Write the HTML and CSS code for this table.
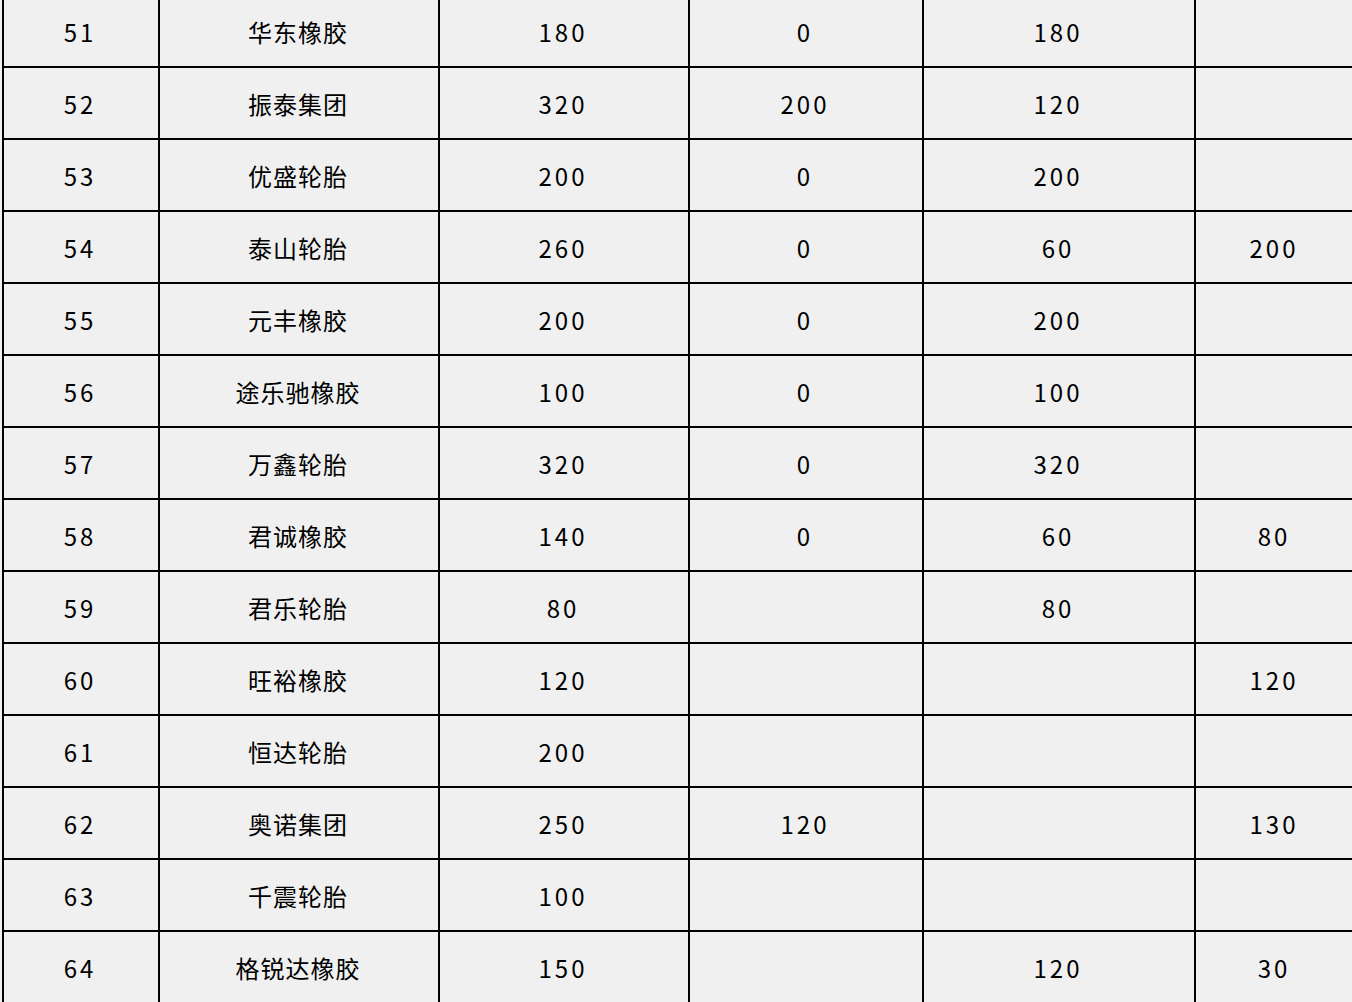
FILE: index.html
```html
<!DOCTYPE html>
<html lang="zh-CN">
<head>
<meta charset="utf-8">
<title>表格</title>
<link rel="stylesheet" href="styles.css">
</head>
<body>
<div class="sheet">
  <div class="row"><div class="c num">51</div><div class="c name">华东橡胶</div><div class="c num">180</div><div class="c num">0</div><div class="c num">180</div><div class="c num"></div></div>
  <div class="row"><div class="c num">52</div><div class="c name">振泰集团</div><div class="c num">320</div><div class="c num">200</div><div class="c num">120</div><div class="c num"></div></div>
  <div class="row"><div class="c num">53</div><div class="c name">优盛轮胎</div><div class="c num">200</div><div class="c num">0</div><div class="c num">200</div><div class="c num"></div></div>
  <div class="row"><div class="c num">54</div><div class="c name">泰山轮胎</div><div class="c num">260</div><div class="c num">0</div><div class="c num">60</div><div class="c num">200</div></div>
  <div class="row"><div class="c num">55</div><div class="c name">元丰橡胶</div><div class="c num">200</div><div class="c num">0</div><div class="c num">200</div><div class="c num"></div></div>
  <div class="row"><div class="c num">56</div><div class="c name">途乐驰橡胶</div><div class="c num">100</div><div class="c num">0</div><div class="c num">100</div><div class="c num"></div></div>
  <div class="row"><div class="c num">57</div><div class="c name">万鑫轮胎</div><div class="c num">320</div><div class="c num">0</div><div class="c num">320</div><div class="c num"></div></div>
  <div class="row"><div class="c num">58</div><div class="c name">君诚橡胶</div><div class="c num">140</div><div class="c num">0</div><div class="c num">60</div><div class="c num">80</div></div>
  <div class="row"><div class="c num">59</div><div class="c name">君乐轮胎</div><div class="c num">80</div><div class="c num"></div><div class="c num">80</div><div class="c num"></div></div>
  <div class="row"><div class="c num">60</div><div class="c name">旺裕橡胶</div><div class="c num">120</div><div class="c num"></div><div class="c num"></div><div class="c num">120</div></div>
  <div class="row"><div class="c num">61</div><div class="c name">恒达轮胎</div><div class="c num">200</div><div class="c num"></div><div class="c num"></div><div class="c num"></div></div>
  <div class="row"><div class="c num">62</div><div class="c name">奥诺集团</div><div class="c num">250</div><div class="c num">120</div><div class="c num"></div><div class="c num">130</div></div>
  <div class="row"><div class="c num">63</div><div class="c name">千震轮胎</div><div class="c num">100</div><div class="c num"></div><div class="c num"></div><div class="c num"></div></div>
  <div class="row"><div class="c num">64</div><div class="c name">格锐达橡胶</div><div class="c num">150</div><div class="c num"></div><div class="c num">120</div><div class="c num">30</div></div>
</div>
</body>
</html>
```
FILE: styles.css
```css
html, body {
  margin: 0;
  padding: 0;
  background: #f0f0f1;
  overflow: hidden;
}
body {
  width: 1352px;
  height: 1002px;
}
.sheet {
  margin: -6px 0 0 2px;
  font-family: "Noto Sans CJK SC", "Noto Sans", sans-serif;
  color: #000;
}
.row {
  display: grid;
  grid-template-columns: 156px 280px 250px 234px 272px 160px;
}
.c {
  box-sizing: border-box;
  height: 72px;
  border-top: 2px solid #000;
  border-left: 2px solid #000;
  display: flex;
  align-items: center;
  justify-content: center;
  padding: 2px 2px 0 0;
  font-size: 24px;
  line-height: 1;
}
.num {
  letter-spacing: 3px;
}
.name {
  letter-spacing: 1px;
}
```
